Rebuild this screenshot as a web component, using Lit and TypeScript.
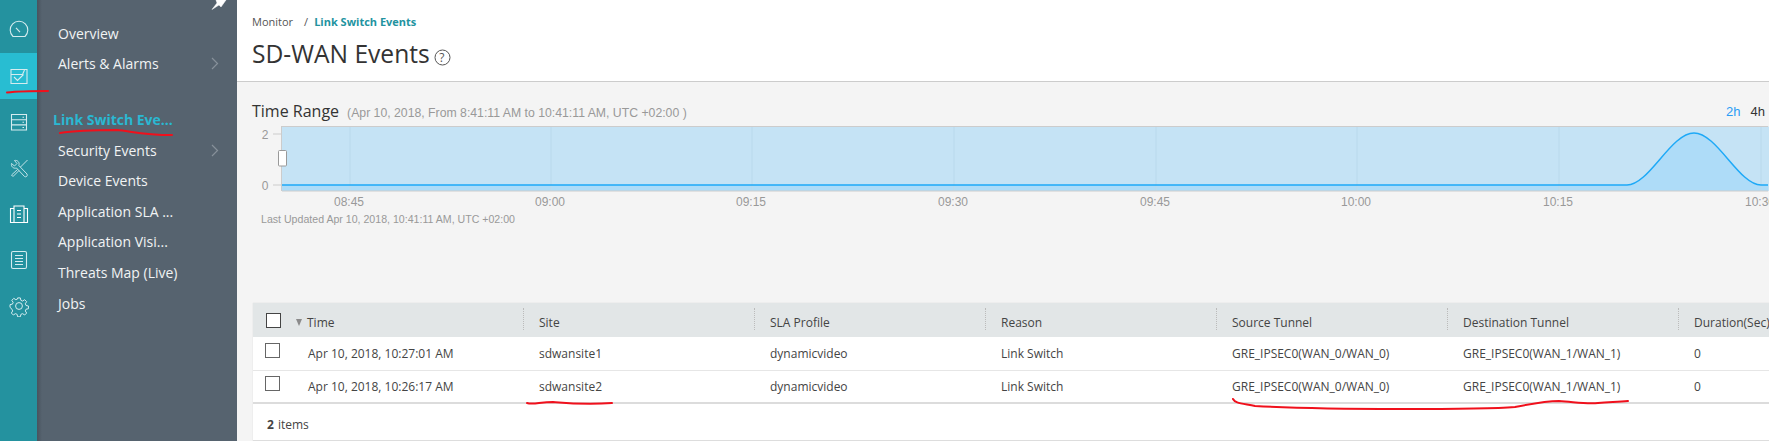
import { LitElement, css, html, svg } from "lit";
import { customElement } from "lit/decorators.js";

const railIcons = [
  svg`<path d="M5 17.500A8.800 8.800 0 1 1 17 17.500Z"/><path d="M8 8.800l4 4.400"/>`,
  svg`<path d="M3 4.500H19V18.500H3Z"/><path d="M3 9.500H14.500L16.500 5"/><path d="M6 12l3.500 3.500 6-6"/>`,
  svg`<path d="M3.500 3.500H18.500V19H3.500ZM3.500 8.700H18.500M3.500 13.900H18.500"/><path d="M14.500 6.200h1.500M14.500 11.300h1.500M14.500 16.500h1.500"/>`,
  svg`<path stroke-width=".9" d="M3.500 6.500L6.500 9 9 6.500 6.500 3.500C9.500 2.800 12 5.500 10.800 8.500L19 17C20 19 18 20.500 16.500 19.500L8.500 11C5.500 12 2.800 9.500 3.500 6.500Z"/><path stroke-width=".9" d="M19.500 3L12.500 10M9.500 12.500L3.500 18 5 19.500 11 13.500"/>`,
  svg`<path stroke="#fff" d="M2.500 5.500H6v14H2.500zM16 5.500h3.500v14H16zM6 3h10v16.500H6z"/><path stroke="#fff" d="M9 7.500h4M9 11h4M9 14.500h4"/>`,
  svg`<rect x="3.500" y="2.500" width="15" height="17" rx="1.500"/><path d="M7 6.500h8M7 9.500h8M7 12.500h8M7 15.500h8"/>`,
  svg`<g transform="translate(1.100 1.100) scale(.9)"><path d="M9.500 2h3l.6 2.700 1.900.8 2.300-1.500 2.200 2.200-1.500 2.300.8 1.900 2.700.6v3l-2.700.6-.8 1.900 1.500 2.300-2.200 2.200-2.300-1.500-1.900.8-.6 2.700h-3l-.6-2.700-1.900-.8-2.300 1.500-2.200-2.200 1.500-2.300-.8-1.900L1 12.500v-3l2.700-.6.800-1.900L3 4.700l2.200-2.200 2.300 1.500 1.900-.8z"/><circle cx="11" cy="11" r="3.800"/></g>`,
];

const navItems = [
  { label: "Overview" },
  { label: "Alerts & Alarms", arrow: true, gapAfter: true },
  { label: "Link Switch Eve...", active: true },
  { label: "Security Events", arrow: true },
  { label: "Device Events" },
  { label: "Application SLA ..." },
  { label: "Application Visi..." },
  { label: "Threats Map (Live)" },
  { label: "Jobs" },
];

const columns = ["Time", "Site", "SLA Profile", "Reason", "Source Tunnel", "Destination Tunnel", "Duration(Sec)"];

const rows = [
  ["Apr 10, 2018, 10:27:01 AM", "sdwansite1", "dynamicvideo", "Link Switch", "GRE_IPSEC0(WAN_0/WAN_0)", "GRE_IPSEC0(WAN_1/WAN_1)", "0"],
  ["Apr 10, 2018, 10:26:17 AM", "sdwansite2", "dynamicvideo", "Link Switch", "GRE_IPSEC0(WAN_0/WAN_0)", "GRE_IPSEC0(WAN_1/WAN_1)", "0"],
];

const ticks = [
  ["08:45", 351],
  ["09:00", 552],
  ["09:15", 753],
  ["09:30", 955],
  ["09:45", 1157],
  ["10:00", 1358],
  ["10:15", 1560],
  ["10:30", 1762],
] as [string, number][];

const curve =
  "M283 185H1628C1650 185 1672 133 1695 133C1718 133 1740 185 1762 185H1769";

@customElement("app-root")
export class AppRoot extends LitElement {
  static styles = css`
    :host {
      display: flex;
      position: relative;
      width: 1769px;
      height: 441px;
      overflow: hidden;
      font-family: "Open Sans", sans-serif;
      color: #333;
      background: #f4f4f4;
    }
    .rail {
      width: 37px;
      flex: none;
      padding-top: 7px;
      box-sizing: border-box;
      background: #24929f;
    }
    .rail-item {
      height: 46px;
      padding-bottom: 1px;
      box-sizing: border-box;
      display: flex;
      align-items: center;
      justify-content: center;
    }
    .rail-item.on {
      background: #28bdd2;
    }
    .rail-item svg {
      width: 22px;
      height: 22px;
      fill: none;
      stroke: #d5ecef;
      stroke-width: 1.1;
    }
    .side {
      position: relative;
      width: 200px;
      flex: none;
      box-sizing: border-box;
      padding: 18px 0 0 21px;
      background: linear-gradient(90deg, #48535e 0, #56636f 5px);
    }
    .pin {
      position: absolute;
      top: 0;
      left: 174px;
      width: 16px;
      height: 10px;
      fill: #fff;
      stroke: #fff;
      stroke-width: 0.5;
    }
    .nav-item {
      height: 30.600px;
      display: flex;
      align-items: center;
      font-size: 14px;
      color: #f1f3f4;
      white-space: nowrap;
    }
    .nav-item.gap {
      margin-bottom: 25px;
    }
    .nav-item.on {
      margin-left: -5px;
      color: #2ab8d2;
      font-weight: 700;
    }
    .nav-item svg {
      position: absolute;
      left: 174px;
      width: 8px;
      height: 13px;
      fill: none;
      stroke: #87919a;
      stroke-width: 1.2;
    }
    .main {
      flex: 1;
      min-width: 0;
      display: flex;
      flex-direction: column;
    }
    .head {
      height: 82px;
      box-sizing: border-box;
      padding: 14px 0 0 15px;
      background: #fff;
      border-bottom: 1px solid #ccc;
    }
    .crumbs {
      display: flex;
      font-size: 11px;
      line-height: 16px;
      color: #555;
    }
    .crumbs .sep {
      margin: 0 6px 0 11px;
    }
    .crumbs b {
      color: #23939f;
    }
    .title {
      display: flex;
      align-items: center;
      margin-top: 6px;
      font-size: 24.600px;
      line-height: 36px;
      color: #333;
    }
    .title svg {
      width: 17px;
      height: 17px;
      margin: 6px 0 0 4px;
      fill: none;
      stroke: #555;
    }
    .title svg text {
      fill: #555;
      stroke: none;
      font-size: 12px;
    }
    .range {
      height: 221px;
      box-sizing: border-box;
      padding: 19px 0 0 15px;
    }
    .range-head {
      height: 20px;
      display: flex;
      align-items: center;
      white-space: nowrap;
    }
    .range-head h2 {
      margin: 0;
      font-size: 16px;
      font-weight: 400;
      color: #333;
    }
    .range-head span {
      margin: 3px 0 0 8px;
      font: 12.250px "Liberation Sans", sans-serif;
      color: #999;
    }
    .spans {
      display: flex;
      gap: 10px;
      margin-left: auto;
      padding-right: 4px;
      font: 13px "Liberation Sans", sans-serif;
      color: #333;
    }
    .spans .on {
      color: #2b9cf5;
    }
    .chart {
      display: block;
      width: 1517px;
      height: 110px;
    }
    .chart text {
      font-family: "Liberation Sans", sans-serif;
      font-size: 12px;
      fill: #999;
    }
    .chart .updated {
      font-size: 10.600px;
    }
    .table {
      flex: 1;
      margin-left: 16px;
      display: flex;
      flex-direction: column;
      background: #fff;
      border-bottom: 1px solid #ddd;
      box-shadow: 0 0 1px #ccc;
      font-size: 12px;
      color: #444;
    }
    .row {
      display: grid;
      grid-template-columns: 270px repeat(5, 231px) 1fr;
      height: 33.500px;
      box-sizing: border-box;
      border-bottom: 1px solid #e6e6e6;
    }
    .row.header {
      height: 34px;
      border: 0;
      background: #e2e6e7;
    }
    .row.last {
      border-bottom: 2px solid #dcdcdc;
    }
    .cell {
      position: relative;
      display: flex;
      align-items: center;
      padding-left: 16px;
      white-space: nowrap;
    }
    .header .cell {
      padding-top: 5px;
    }
    .header .cell + .cell::before {
      content: "";
      position: absolute;
      left: 0;
      top: 5px;
      bottom: 7px;
      border-left: 1px dotted #bbb;
    }
    .cell.first {
      padding-left: 12px;
    }
    .check {
      flex: none;
      width: 15px;
      height: 15px;
      box-sizing: border-box;
      margin-right: 28px;
      margin-bottom: 5px;
      background: #fff;
      border: 1px solid #666;
    }
    .header .check {
      margin: 0 15px 4px 1px;
      height: 15px;
      border-color: #444;
    }
    .sort {
      width: 0;
      height: 0;
      margin-right: 5px;
      border-left: 3.500px solid transparent;
      border-right: 3.500px solid transparent;
      border-top: 7px solid #8b8b8b;
    }
    .foot {
      flex: 1;
      display: flex;
      align-items: center;
      padding: 5px 0 0 14px;
      color: #444;
    }
    .foot b {
      margin-right: 4px;
    }
    .marks {
      position: absolute;
      inset: 0;
      width: 1769px;
      height: 441px;
      fill: none;
      stroke: #f0101c;
      stroke-width: 2;
      stroke-linecap: round;
      pointer-events: none;
    }
  `;

  render() {
    return html`
      <div class="rail">
        ${railIcons.map(
          (icon, i) => html`
            <div class="rail-item ${i === 1 ? "on" : ""}">
              <svg viewBox="0 0 22 22">${icon}</svg>
            </div>
          `
        )}
      </div>
      <div class="side">
        <svg class="pin" viewBox="0 0 16 10">
          <path d="M5 0H15L10 7 8 5 1 9.500 6 3Z" />
        </svg>
        ${navItems.map(
          (item) => html`
            <div class="nav-item ${item.gapAfter ? "gap" : ""} ${item.active ? "on" : ""}">
              ${item.label}
              ${item.arrow
                ? html`<svg viewBox="0 0 8 13"><path d="M1 1l5.500 5.500L1 12" /></svg>`
                : ""}
            </div>
          `
        )}
      </div>
      <div class="main">
        <div class="head">
          <div class="crumbs">
            <span>Monitor</span><span class="sep">/</span><b>Link Switch Events</b>
          </div>
          <div class="title">
            SD-WAN Events
            <svg viewBox="0 0 17 17">
              <circle cx="8.500" cy="8.500" r="7.500" />
              <text x="5.300" y="12.800">?</text>
            </svg>
          </div>
        </div>
        <div class="range">
          <div class="range-head">
            <h2>Time Range</h2>
            <span>(Apr 10, 2018, From 8:41:11 AM to 10:41:11 AM, UTC +02:00 )</span>
            <div class="spans"><div class="on">2h</div><div>4h</div></div>
          </div>
          ${this.renderChart()}
        </div>
        <div class="table">
          <div class="row header">
            ${columns.map(
              (col, i) => html`
                <div class="cell ${i === 0 ? "first" : ""}">
                  ${i === 0 ? html`<div class="check"></div><div class="sort"></div>` : ""}${col}
                </div>
              `
            )}
          </div>
          ${rows.map(
            (row, r) => html`
              <div class="row ${r === rows.length - 1 ? "last" : ""}">
                ${row.map(
                  (val, i) => html`
                    <div class="cell ${i === 0 ? "first" : ""}">
                      ${i === 0 ? html`<div class="check"></div>` : ""}${val}
                    </div>
                  `
                )}
              </div>
            `
          )}
          <div class="foot"><b>2</b> items</div>
        </div>
      </div>
      <svg class="marks" viewBox="0 0 1769 441">
        <path d="M7 92.500C20 91 34 91 48 91" />
        <path d="M60 133C72 131 95 130 117 130C130 131 143 135 172 135" />
        <path d="M527 403C533 405 540 402 553 402C565 403 585 405 612 403" />
        <path d="M1233 399C1235 403 1240 403 1255 406C1290 408 1340 409 1400 409C1440 409 1490 409 1515 407C1530 404 1545 401 1559 401C1575 402 1585 404 1598 403C1610 402 1618 402 1628 401" />
      </svg>
    `;
  }

  renderChart() {
    return html`
      <svg class="chart" viewBox="253 121 1517 110">
        <rect x="283" y="126.500" width="1487" height="64.500" fill="#c5e3f5" />
        <path d="${curve}V191H283Z" fill="#aedcf8" />
        ${ticks.map(
          ([label, x]) => svg`
            <path d="M${x} 127V191" stroke="#b9d9ec" />
            <text x=${x - 1} y="206" text-anchor="middle">${label}</text>
          `
        )}
        <path d="M283 126.500H1769M283 191H1769M282.500 126V191" fill="none" stroke="#ccc" />
        <path d=${curve} fill="none" stroke="#1ea9f7" stroke-width="1.500" />
        <path d="M274 134H283M274 185H283" stroke="#ccc" />
        <text x="266" y="138.500" text-anchor="middle">2</text>
        <text x="266" y="190" text-anchor="middle">0</text>
        <rect x="279.500" y="150.500" width="8" height="15.500" rx="1" fill="#fff" stroke="#999" />
        <text class="updated" x="262" y="223">Last Updated Apr 10, 2018, 10:41:11 AM, UTC +02:00</text>
      </svg>
    `;
  }
}

declare global {
  interface HTMLElementTagNameMap {
    "app-root": AppRoot;
  }
}
